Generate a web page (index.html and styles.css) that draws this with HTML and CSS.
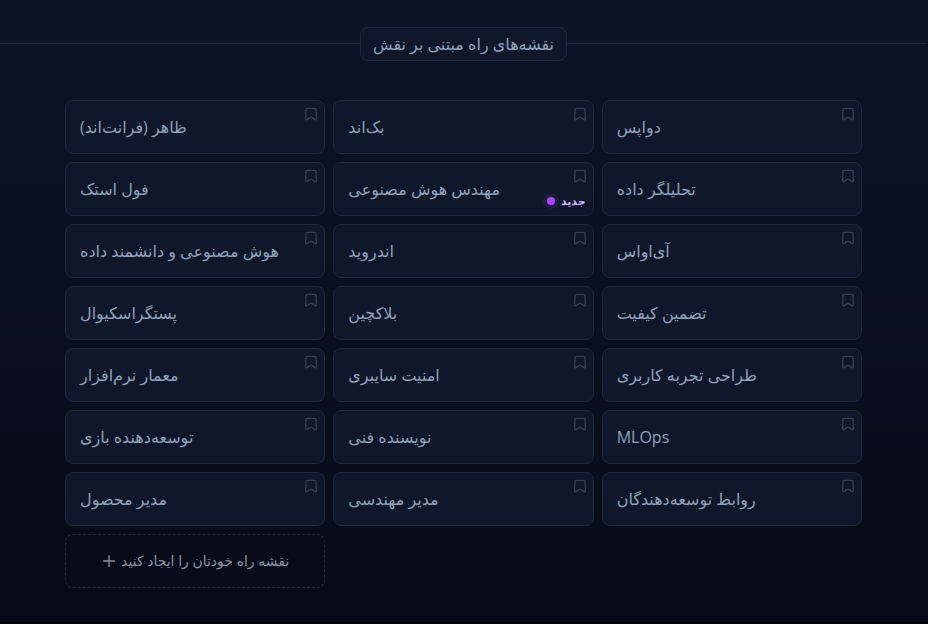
FILE: index.html
```html
<!DOCTYPE html>
<html lang="fa">
<head>
<meta charset="utf-8">
<meta name="viewport" content="width=device-width, initial-scale=1">
<title>نقشه‌های راه</title>
<link rel="stylesheet" href="styles.css">
</head>
<body>
<svg class="sprite" aria-hidden="true">
  <symbol id="bookmark" viewBox="0 0 24 24"><path d="M6.5 3.5h11a2 2 0 0 1 2 2l.5 14c0 1.200-1 1.500-2 1L12 16.500 6 20.500c-1 .5-2 .2-2-1l.5-14a2 2 0 0 1 2-2z"/></symbol>
  <symbol id="plus" viewBox="0 0 24 24"><path d="M4 12h16M12 4v16"/></symbol>
</svg>
<section class="roadmaps">
  <div class="heading"><h2 class="heading-label">نقشه‌های راه مبتنی بر نقش</h2></div>
  <div class="container">
    <ul class="grid">
      <li class="item"><a class="card" href="#">ظاهر (فرانت‌اند)</a><button class="mark" aria-label="نشان کردن"><svg><use href="#bookmark"/></svg></button></li>
      <li class="item"><a class="card" href="#">بک‌اند</a><button class="mark" aria-label="نشان کردن"><svg><use href="#bookmark"/></svg></button></li>
      <li class="item"><a class="card" href="#">دواپس</a><button class="mark" aria-label="نشان کردن"><svg><use href="#bookmark"/></svg></button></li>
      <li class="item"><a class="card" href="#">فول استک</a><button class="mark" aria-label="نشان کردن"><svg><use href="#bookmark"/></svg></button></li>
      <li class="item"><a class="card" href="#">مهندس هوش مصنوعی</a><button class="mark" aria-label="نشان کردن"><svg><use href="#bookmark"/></svg></button><span class="new"><span class="dot"></span>جدید</span></li>
      <li class="item"><a class="card" href="#">تحلیلگر داده</a><button class="mark" aria-label="نشان کردن"><svg><use href="#bookmark"/></svg></button></li>
      <li class="item"><a class="card" href="#">هوش مصنوعی و دانشمند داده</a><button class="mark" aria-label="نشان کردن"><svg><use href="#bookmark"/></svg></button></li>
      <li class="item"><a class="card" href="#">اندروید</a><button class="mark" aria-label="نشان کردن"><svg><use href="#bookmark"/></svg></button></li>
      <li class="item"><a class="card" href="#">آی‌اواس</a><button class="mark" aria-label="نشان کردن"><svg><use href="#bookmark"/></svg></button></li>
      <li class="item"><a class="card" href="#">پستگراسکیوال</a><button class="mark" aria-label="نشان کردن"><svg><use href="#bookmark"/></svg></button></li>
      <li class="item"><a class="card" href="#">بلاکچین</a><button class="mark" aria-label="نشان کردن"><svg><use href="#bookmark"/></svg></button></li>
      <li class="item"><a class="card" href="#">تضمین کیفیت</a><button class="mark" aria-label="نشان کردن"><svg><use href="#bookmark"/></svg></button></li>
      <li class="item"><a class="card" href="#">معمار نرم‌افزار</a><button class="mark" aria-label="نشان کردن"><svg><use href="#bookmark"/></svg></button></li>
      <li class="item"><a class="card" href="#">امنیت سایبری</a><button class="mark" aria-label="نشان کردن"><svg><use href="#bookmark"/></svg></button></li>
      <li class="item"><a class="card" href="#">طراحی تجربه کاربری</a><button class="mark" aria-label="نشان کردن"><svg><use href="#bookmark"/></svg></button></li>
      <li class="item"><a class="card" href="#">توسعه‌دهنده بازی</a><button class="mark" aria-label="نشان کردن"><svg><use href="#bookmark"/></svg></button></li>
      <li class="item"><a class="card" href="#">نویسنده فنی</a><button class="mark" aria-label="نشان کردن"><svg><use href="#bookmark"/></svg></button></li>
      <li class="item"><a class="card" href="#">MLOps</a><button class="mark" aria-label="نشان کردن"><svg><use href="#bookmark"/></svg></button></li>
      <li class="item"><a class="card" href="#">مدیر محصول</a><button class="mark" aria-label="نشان کردن"><svg><use href="#bookmark"/></svg></button></li>
      <li class="item"><a class="card" href="#">مدیر مهندسی</a><button class="mark" aria-label="نشان کردن"><svg><use href="#bookmark"/></svg></button></li>
      <li class="item"><a class="card" href="#">روابط توسعه‌دهندگان</a><button class="mark" aria-label="نشان کردن"><svg><use href="#bookmark"/></svg></button></li>
      <li class="item"><button class="create"><svg><use href="#plus"/></svg>نقشه راه خودتان را ایجاد کنید</button></li>
    </ul>
  </div>
</section>
</body>
</html>
```
FILE: styles.css
```css
* { box-sizing: border-box; }
body {
  margin: 0;
  background: #000;
  font-family: "Open Sans", "DejaVu Sans", sans-serif;
}
.sprite { display: none; }
svg {
  fill: none;
  stroke: currentColor;
  stroke-width: 2;
  stroke-linecap: round;
  stroke-linejoin: round;
}
.roadmaps {
  padding: 27px 1px 34px 0;
  background: linear-gradient(#0d1426, #050b18);
}
.heading {
  display: flex;
  align-items: center;
  margin-bottom: 39px;
}
.heading::before, .heading::after {
  content: "";
  flex: 1;
  height: 1px;
  margin-bottom: 1px;
  background: #1e293b;
}
.heading-label {
  margin: 0;
  padding: 4px 12px;
  border: 1px solid #1e293b;
  border-radius: 8px;
  background: #0f172a;
  color: #90a1b9;
  font-size: 16px;
  font-weight: 400;
  line-height: 24px;
}
.container {
  max-width: 829px;
  margin: 0 auto;
  padding: 0 16px;
}
.grid {
  display: grid;
  grid-template-columns: repeat(3, minmax(0, 1fr));
  gap: 8px;
  margin: 0;
  padding: 0;
  list-style: none;
}
.item { position: relative; }
.card {
  display: block;
  padding: 14px;
  border: 1px solid #1e293b;
  border-radius: 8px;
  background: #0f172a;
  color: #90a1b9;
  font-size: 16px;
  line-height: 24px;
  text-decoration: none;
}
.mark {
  position: absolute;
  top: 6px;
  right: 6px;
  padding: 0;
  border: 0;
  background: none;
  color: #314158;
}
.mark svg {
  display: block;
  width: 16px;
  height: 16px;
}
.new {
  position: absolute;
  right: 8px;
  bottom: 7px;
  display: flex;
  align-items: center;
  gap: 6px;
  color: #dab2ff;
  font-size: 11px;
  font-weight: 600;
  line-height: 16px;
}
.dot {
  width: 8px;
  height: 8px;
  border-radius: 50%;
  background: #ad46ff;
  box-shadow: 0 0 0 4px #ad46ff1a;
}
.create {
  display: flex;
  align-items: center;
  justify-content: center;
  gap: 4px;
  width: 100%;
  padding: 14px;
  border: 1px dashed #1e293b;
  border-radius: 8px;
  background: none;
  color: #8a92a0;
  font: inherit;
  font-size: 14px;
  line-height: 24px;
}
.create svg {
  width: 16px;
  height: 16px;
}
```
